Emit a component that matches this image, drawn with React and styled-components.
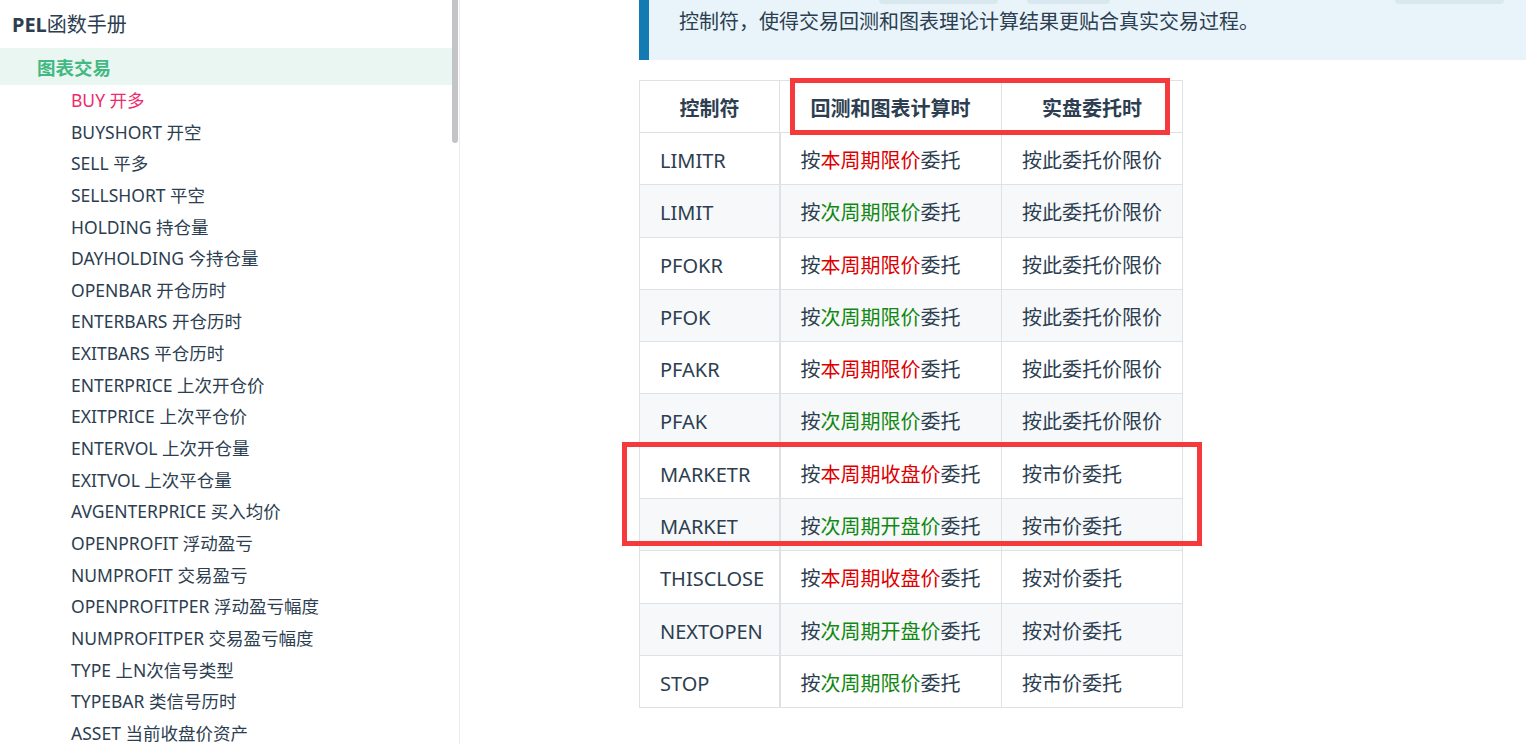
import React from "react";
import styled, { createGlobalStyle } from "styled-components";

const GlobalStyle = createGlobalStyle`
  html, body {
    margin: 0;
    padding: 0;
    overflow: hidden;
    background: #fff;
  }
  body {
    font-family: "Noto Sans", "Noto Sans CJK SC", sans-serif;
    color: #2c3e50;
  }
`;

const Page = styled.div`
  display: flex;
  height: 744px;
  width: 1526px;
  overflow: hidden;
`;

const Sidebar = styled.aside`
  display: flex;
  width: 460px;
  flex-shrink: 0;
  border-right: 1px solid #eaecef;
  box-sizing: border-box;
`;

const SidebarBody = styled.div`
  flex: 1;
  padding-top: 10px;
`;

const Scrollbar = styled.div`
  width: 6px;
  margin-right: 1px;
`;

const Thumb = styled.div`
  height: 143px;
  background: #c4c4c7;
  border-radius: 0 0 3px 3px;
`;

const Title = styled.div`
  padding-left: 12px;
  font-size: 20px;
  line-height: 30px;
  b {
    font-weight: 700;
  }
`;

const Heading = styled.div`
  margin-top: 8px;
  height: 37px;
  display: flex;
  align-items: center;
  padding-left: 37px;
  background: #eaf6f1;
  color: #42b983;
  font-size: 18.5px;
  font-weight: 700;
`;

const NavList = styled.ul`
  list-style: none;
  margin: 0;
  padding: 0;
`;

const NavItem = styled.li`
  padding-left: 71px;
  height: 31.65px;
  line-height: 31.65px;
  font-size: 17.5px;
  white-space: nowrap;
  color: ${(p) => (p.$active ? "#ec2c6c" : "#2c3e50")};
`;

const Main = styled.main`
  flex: 1;
  padding-left: 179px;
  min-width: 0;
`;

const Tip = styled.div`
  background: #e8f4fa;
  border-left: 10px solid #137ab2;
  padding: 0 30px 20px;
  font-size: 20px;
`;

const ClippedLine = styled.div`
  height: 4px;
  position: relative;
`;

const Chip = styled.span`
  position: absolute;
  top: 0;
  height: 4px;
  background: #d9e7ef;
  border-radius: 0 0 4px 4px;
`;

const TipText = styled.p`
  margin: 0;
  line-height: 36px;
  white-space: nowrap;
`;

const TableWrap = styled.div`
  position: relative;
  margin-top: 20px;
  width: 543px;
`;

const Table = styled.table`
  border-collapse: collapse;
  table-layout: fixed;
  width: 543px;
  font-size: 20px;
  color: #2c3e50;

  tbody tr:nth-child(2n) {
    background: #f6f8fa;
  }
`;

const Th = styled.th`
  border: 1px solid #dfe2e5;
  padding: 14px 20px 9px;
  line-height: 28px;
  font-weight: 700;
  text-align: center;
  white-space: nowrap;
`;

const Td = styled.td`
  border: 1px solid #dfe2e5;
  border-right-width: ${(p) => (p.$first ? "2px" : "1px")};
  padding: 14px 20px 10px;
  line-height: 27.3px;
  white-space: nowrap;
`;

const Hl = styled.span`
  color: ${(p) => (p.$tone === "red" ? "#dd0000" : "#118811")};
`;

const Marker = styled.div`
  position: absolute;
  border: 5px solid #f43a3a;
  box-sizing: border-box;
  pointer-events: none;
`;

const navItems = [
  "BUY 开多",
  "BUYSHORT 开空",
  "SELL 平多",
  "SELLSHORT 平空",
  "HOLDING 持仓量",
  "DAYHOLDING 今持仓量",
  "OPENBAR 开仓历时",
  "ENTERBARS 开仓历时",
  "EXITBARS 平仓历时",
  "ENTERPRICE 上次开仓价",
  "EXITPRICE 上次平仓价",
  "ENTERVOL 上次开仓量",
  "EXITVOL 上次平仓量",
  "AVGENTERPRICE 买入均价",
  "OPENPROFIT 浮动盈亏",
  "NUMPROFIT 交易盈亏",
  "OPENPROFITPER 浮动盈亏幅度",
  "NUMPROFITPER 交易盈亏幅度",
  "TYPE 上N次信号类型",
  "TYPEBAR 类信号历时",
  "ASSET 当前收盘价资产",
];

const rows = [
  ["LIMITR", "red", "本周期限价", "按此委托价限价"],
  ["LIMIT", "green", "次周期限价", "按此委托价限价"],
  ["PFOKR", "red", "本周期限价", "按此委托价限价"],
  ["PFOK", "green", "次周期限价", "按此委托价限价"],
  ["PFAKR", "red", "本周期限价", "按此委托价限价"],
  ["PFAK", "green", "次周期限价", "按此委托价限价"],
  ["MARKETR", "red", "本周期收盘价", "按市价委托"],
  ["MARKET", "green", "次周期开盘价", "按市价委托"],
  ["THISCLOSE", "red", "本周期收盘价", "按对价委托"],
  ["NEXTOPEN", "green", "次周期开盘价", "按对价委托"],
  ["STOP", "green", "次周期限价", "按市价委托"],
];

export default function App() {
  return (
    <>
      <GlobalStyle />
      <Page>
        <Sidebar>
          <SidebarBody>
            <Title>
              <b>PEL</b>函数手册
            </Title>
            <Heading>图表交易</Heading>
            <NavList>
              {navItems.map((item, i) => (
                <NavItem key={item} $active={i === 0}>
                  {item}
                </NavItem>
              ))}
            </NavList>
          </SidebarBody>
          <Scrollbar>
            <Thumb />
          </Scrollbar>
        </Sidebar>

        <Main>
          <Tip>
            <ClippedLine>
              <Chip style={{ left: 200, width: 119 }} />
              <Chip style={{ left: 348, width: 83 }} />
              <Chip style={{ left: 716, width: 109 }} />
            </ClippedLine>
            <TipText>控制符，使得交易回测和图表理论计算结果更贴合真实交易过程。</TipText>
          </Tip>

          <TableWrap>
            <Table>
              <colgroup>
                <col style={{ width: 140 }} />
                <col style={{ width: 222 }} />
                <col style={{ width: 181 }} />
              </colgroup>
              <thead>
                <tr>
                  <Th>控制符</Th>
                  <Th>回测和图表计算时</Th>
                  <Th>实盘委托时</Th>
                </tr>
              </thead>
              <tbody>
                {rows.map(([code, tone, mid, live]) => (
                  <tr key={code}>
                    <Td $first>{code}</Td>
                    <Td>
                      按<Hl $tone={tone}>{mid}</Hl>委托
                    </Td>
                    <Td>{live}</Td>
                  </tr>
                ))}
              </tbody>
            </Table>
            <Marker style={{ left: 151, top: -2, width: 380, height: 57 }} />
            <Marker style={{ left: -17, top: 362, width: 580, height: 104 }} />
          </TableWrap>
        </Main>
      </Page>
    </>
  );
}
